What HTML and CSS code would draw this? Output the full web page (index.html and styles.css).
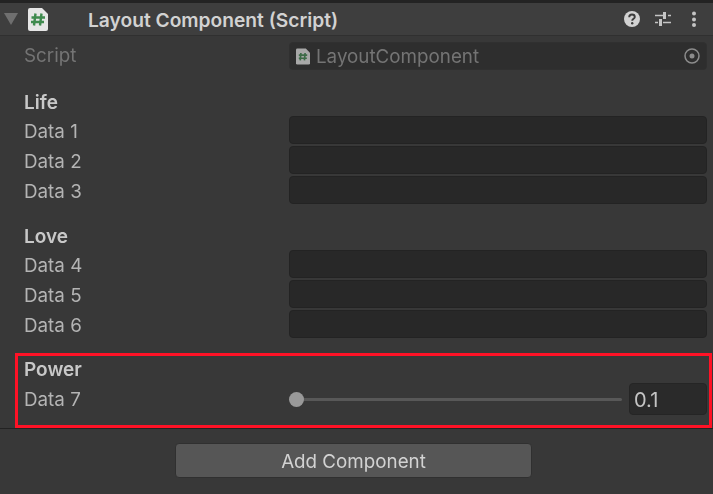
FILE: index.html
```html
<!DOCTYPE html>
<html lang="en">
  <head>
    <meta charset="UTF-8" />
    <meta name="viewport" content="width=device-width, initial-scale=1.0" />
    <title>Layout Component</title>
    <link rel="stylesheet" href="styles.css">
  </head>
  <body>
    <div class="header">
      <span class="fold"></span>
      <svg class="file-icon" width="20" height="23" viewBox="0 0 20 23">
        <path d="M2 0H14L20 6V21a2 2 0 0 1-2 2H2a2 2 0 0 1-2-2V2a2 2 0 0 1 2-2Z" fill="#e6e6e6"/>
        <path d="M7.500 5.500 6 17.500M13.500 5.500 12 17.500M3.500 9.500H17M3 14H16" stroke="#3f8a4e" stroke-width="2.400" fill="none"/>
      </svg>
      <span class="title">Layout Component (Script)</span>
      <svg class="tool" width="16" height="16" viewBox="0 0 16 16">
        <circle cx="8" cy="8" r="8" fill="#d2d2d2"/>
        <path d="M5.2 6.2C5.2 4.5 6.5 3.5 8 3.5S10.8 4.5 10.8 6C10.800 7.800 8.200 7.800 8.200 9.800" stroke="#3c3c3c" stroke-width="1.900" fill="none"/>
        <circle cx="8.200" cy="12.300" r="1.200" fill="#3c3c3c"/>
      </svg>
      <svg class="tool sliders" width="16" height="16" viewBox="0 0 16 16">
        <path d="M0 4.500H8M13 4.500H16M0 11.500H3M8 11.500H16" stroke="#c4c4c4" stroke-width="1.600" fill="none"/>
        <path d="M9.500 1V8M5.500 8V15" stroke="#c4c4c4" stroke-width="3" fill="none"/>
      </svg>
      <svg class="tool menu" width="6" height="16" viewBox="0 0 6 16">
        <circle cx="3" cy="2.500" r="2" fill="#c4c4c4"/>
        <circle cx="3" cy="8.500" r="2" fill="#c4c4c4"/>
        <circle cx="3" cy="14" r="2" fill="#c4c4c4"/>
      </svg>
    </div>

    <div class="body">
      <div class="row script-row">
        <span class="label dim">Script</span>
        <div class="object-field">
          <svg class="small-file" width="14" height="17" viewBox="0 0 20 23">
            <path d="M2 0H14L20 6V21a2 2 0 0 1-2 2H2a2 2 0 0 1-2-2V2a2 2 0 0 1 2-2Z" fill="#a8a8a8"/>
            <path d="M7 6.500 6 17M13 6.500 12 17M4 9.500H16M4 14H15.500" stroke="#3d6b47" stroke-width="2.400" fill="none"/>
          </svg>
          <span class="object-name">LayoutComponent</span>
          <svg class="picker" width="16" height="16" viewBox="0 0 16 16">
            <circle cx="8" cy="8" r="7" stroke="#8c8c8c" stroke-width="1.500" fill="none"/>
            <circle cx="8" cy="8" r="2.500" fill="#8c8c8c"/>
          </svg>
        </div>
      </div>

      <div class="group">
        <h3 class="group-title">Life</h3>
        <div class="row"><span class="label">Data 1</span><div class="field"></div></div>
        <div class="row"><span class="label">Data 2</span><div class="field"></div></div>
        <div class="row"><span class="label">Data 3</span><div class="field"></div></div>
      </div>

      <div class="group">
        <h3 class="group-title">Love</h3>
        <div class="row"><span class="label">Data 4</span><div class="field"></div></div>
        <div class="row"><span class="label">Data 5</span><div class="field"></div></div>
        <div class="row"><span class="label">Data 6</span><div class="field"></div></div>
      </div>

      <div class="highlight">
        <h3 class="group-title">Power</h3>
        <div class="row">
          <span class="label">Data 7</span>
          <div class="slider">
            <div class="track"><span class="thumb"></span></div>
            <div class="number">0.1</div>
          </div>
        </div>
      </div>
    </div>

    <div class="footer">
      <button class="add-button">Add Component</button>
    </div>
  </body>
</html>
```

FILE: styles.css
```css
html,
body {
  height: 100%;
}
body {
  margin: 0;
  background: #383838;
  color: #b4b4b4;
  font-family: Inter, "Liberation Sans", sans-serif;
  font-size: 18.8px;
  overflow: hidden;
  filter: blur(0.4px);
}
.header {
  display: flex;
  align-items: center;
  height: 32px;
  background: #3e3e3e;
  border-top: 3px solid #232323;
  border-bottom: 1px solid #303030;
}
.fold {
  width: 0;
  height: 0;
  margin-left: 4px;
  border-left: 7px solid transparent;
  border-right: 7px solid transparent;
  border-top: 12px solid #6f6f6f;
}
.file-icon {
  margin-left: 10px;
}
.title {
  margin-left: 40px;
  padding-top: 1px;
  flex: 1;
  font-size: 19.2px;
  font-weight: 600;
  color: #d2d2d2;
}
.tool {
  margin-right: 15px;
}
.tool.sliders {
  margin-right: 20px;
}
.tool.menu {
  margin-right: 16px;
}
.body {
  padding-top: 6px;
}
.row {
  display: flex;
  align-items: center;
  height: 30px;
  padding-left: 24px;
  padding-right: 6px;
}
.label {
  width: 265px;
  flex: none;
  padding-top: 2px;
}
.dim {
  color: #747474;
}
.field,
.object-field {
  flex: 1;
  height: 28px;
  box-sizing: border-box;
  background: #282828;
  border: 1px solid #232323;
  border-radius: 4px;
}
.object-field {
  display: flex;
  align-items: center;
  background: #2e2e2e;
  border-color: #303030;
  padding: 0 6px;
}
.small-file {
  margin-right: 6px;
}
.object-name {
  flex: 1;
  color: #747474;
}
.group {
  padding-top: 15px;
}
.group + .group {
  padding-top: 14px;
}
.group-title {
  box-sizing: border-box;
  margin: 0;
  height: 30px;
  padding-top: 6px;
  line-height: 24px;
  padding-left: 24px;
  font-size: 19px;
  font-weight: 600;
  color: #c8c8c8;
}
.script-row {
  height: 28px;
}
.script-row .label {
  padding-top: 0;
  padding-bottom: 2px;
}
.highlight {
  box-sizing: border-box;
  height: 75px;
  margin: 14px 1px 0 15px;
  border: 3px solid #ff1226;
}
.highlight .group-title {
  height: 28px;
  padding-top: 0;
  line-height: 28px;
  padding-left: 6px;
}
.highlight .row {
  padding-left: 6px;
  padding-right: 2px;
}
.highlight .label {
  padding-top: 0;
}
.slider {
  flex: 1;
  display: flex;
  align-items: center;
}
.track {
  position: relative;
  flex: 1;
  height: 3px;
  background: #585858;
  border-radius: 2px;
  margin-right: 7px;
}
.thumb {
  position: absolute;
  left: 0;
  top: -6px;
  width: 15px;
  height: 15px;
  border-radius: 50%;
  background: #999;
}
.number {
  box-sizing: border-box;
  flex: none;
  width: 78px;
  height: 32px;
  line-height: 32px;
  padding-left: 4px;
  background: #2a2a2a;
  border: 1px solid #252525;
  border-radius: 4px;
  color: #c4c4c4;
  font-size: 20px;
}
.footer {
  display: flex;
  justify-content: center;
  border-top: 1px solid #222;
  padding-top: 14px;
}
.add-button {
  width: 357px;
  height: 35px;
  margin-right: 6px;
  padding-top: 2px;
  background: #565656;
  border: 1px solid #303030;
  border-radius: 4px;
  color: #d2d2d2;
  font-family: inherit;
  font-size: 18.8px;
}
```
